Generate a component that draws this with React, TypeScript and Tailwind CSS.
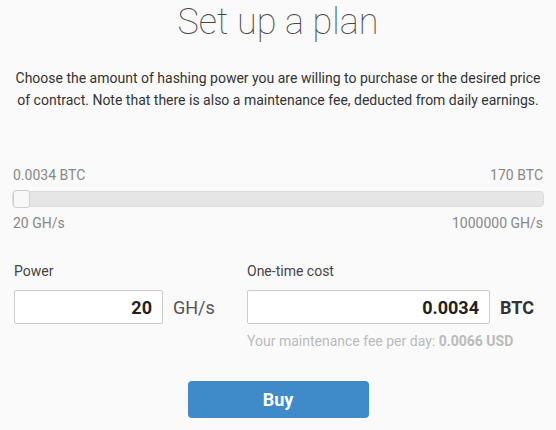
export default function App() {
  return (
    <div className="w-[556px] h-[430px] bg-[#fafafa] overflow-hidden font-['Roboto',sans-serif] text-[#333]">
      <h1 className="text-center text-[36px] font-thin leading-[44px] pt-[0px] text-[#444]">Set up a plan</h1>
      <p className="mt-[23px] text-center text-[14px] leading-[22px] text-[#333] px-[10px]">
        Choose the amount of hashing power you are willing to purchase or the desired price of contract. Note that there is also a maintenance fee, deducted from daily earnings.
      </p>

      <div className="mt-[54px] px-[12px]">
        <div className="flex justify-between text-[14px] leading-[20px] text-[#888] px-[1px]">
          <span>0.0034 BTC</span>
          <span>170 BTC</span>
        </div>
        <div className="relative mt-[6px] h-[16px] rounded-[4px] bg-[#e6e6e6] border border-[#dcdcdc]">
          <div className="absolute left-[0px] top-[-2px] w-[17px] h-[18px] rounded-[3px] bg-[#f8f8f8] border border-[#cfcfcf]" />
        </div>
        <div className="mt-[6px] flex justify-between text-[14px] leading-[20px] text-[#888] px-[1px]">
          <span>20 GH/s</span>
          <span>1000000 GH/s</span>
        </div>
      </div>

      <div className="mt-[28px] flex px-[14px]">
        <div className="w-[233px]">
          <div className="text-[14px] leading-[20px] text-[#444]">Power</div>
          <div className="mt-[9px] flex items-center">
            <div className="w-[149px] h-[34px] bg-white border border-[#ccc] rounded-[2px] flex items-center justify-end pr-[10px] text-[18px] font-bold text-[#222]">20</div>
            <span className="ml-[10px] text-[18px] text-[#555]">GH/s</span>
          </div>
        </div>
        <div>
          <div className="text-[14px] leading-[20px] text-[#444]">One-time cost</div>
          <div className="mt-[9px] flex items-center">
            <div className="w-[243px] h-[34px] bg-white border border-[#ccc] rounded-[2px] flex items-center justify-end pr-[10px] text-[18px] font-bold text-[#222]">0.0034</div>
            <span className="ml-[10px] text-[18px] font-bold text-[#333]">BTC</span>
          </div>
          <div className="mt-[8px] text-[14px] leading-[18px] text-[#bbb]">
            Your maintenance fee per day: <span className="font-bold">0.0066 USD</span>
          </div>
        </div>
      </div>

      <div className="mt-[31px] flex justify-center">
        <button className="w-[181px] h-[37px] rounded-[4px] bg-[#3f8ac8] text-white text-[18px] font-bold">Buy</button>
      </div>
    </div>
  );
}
